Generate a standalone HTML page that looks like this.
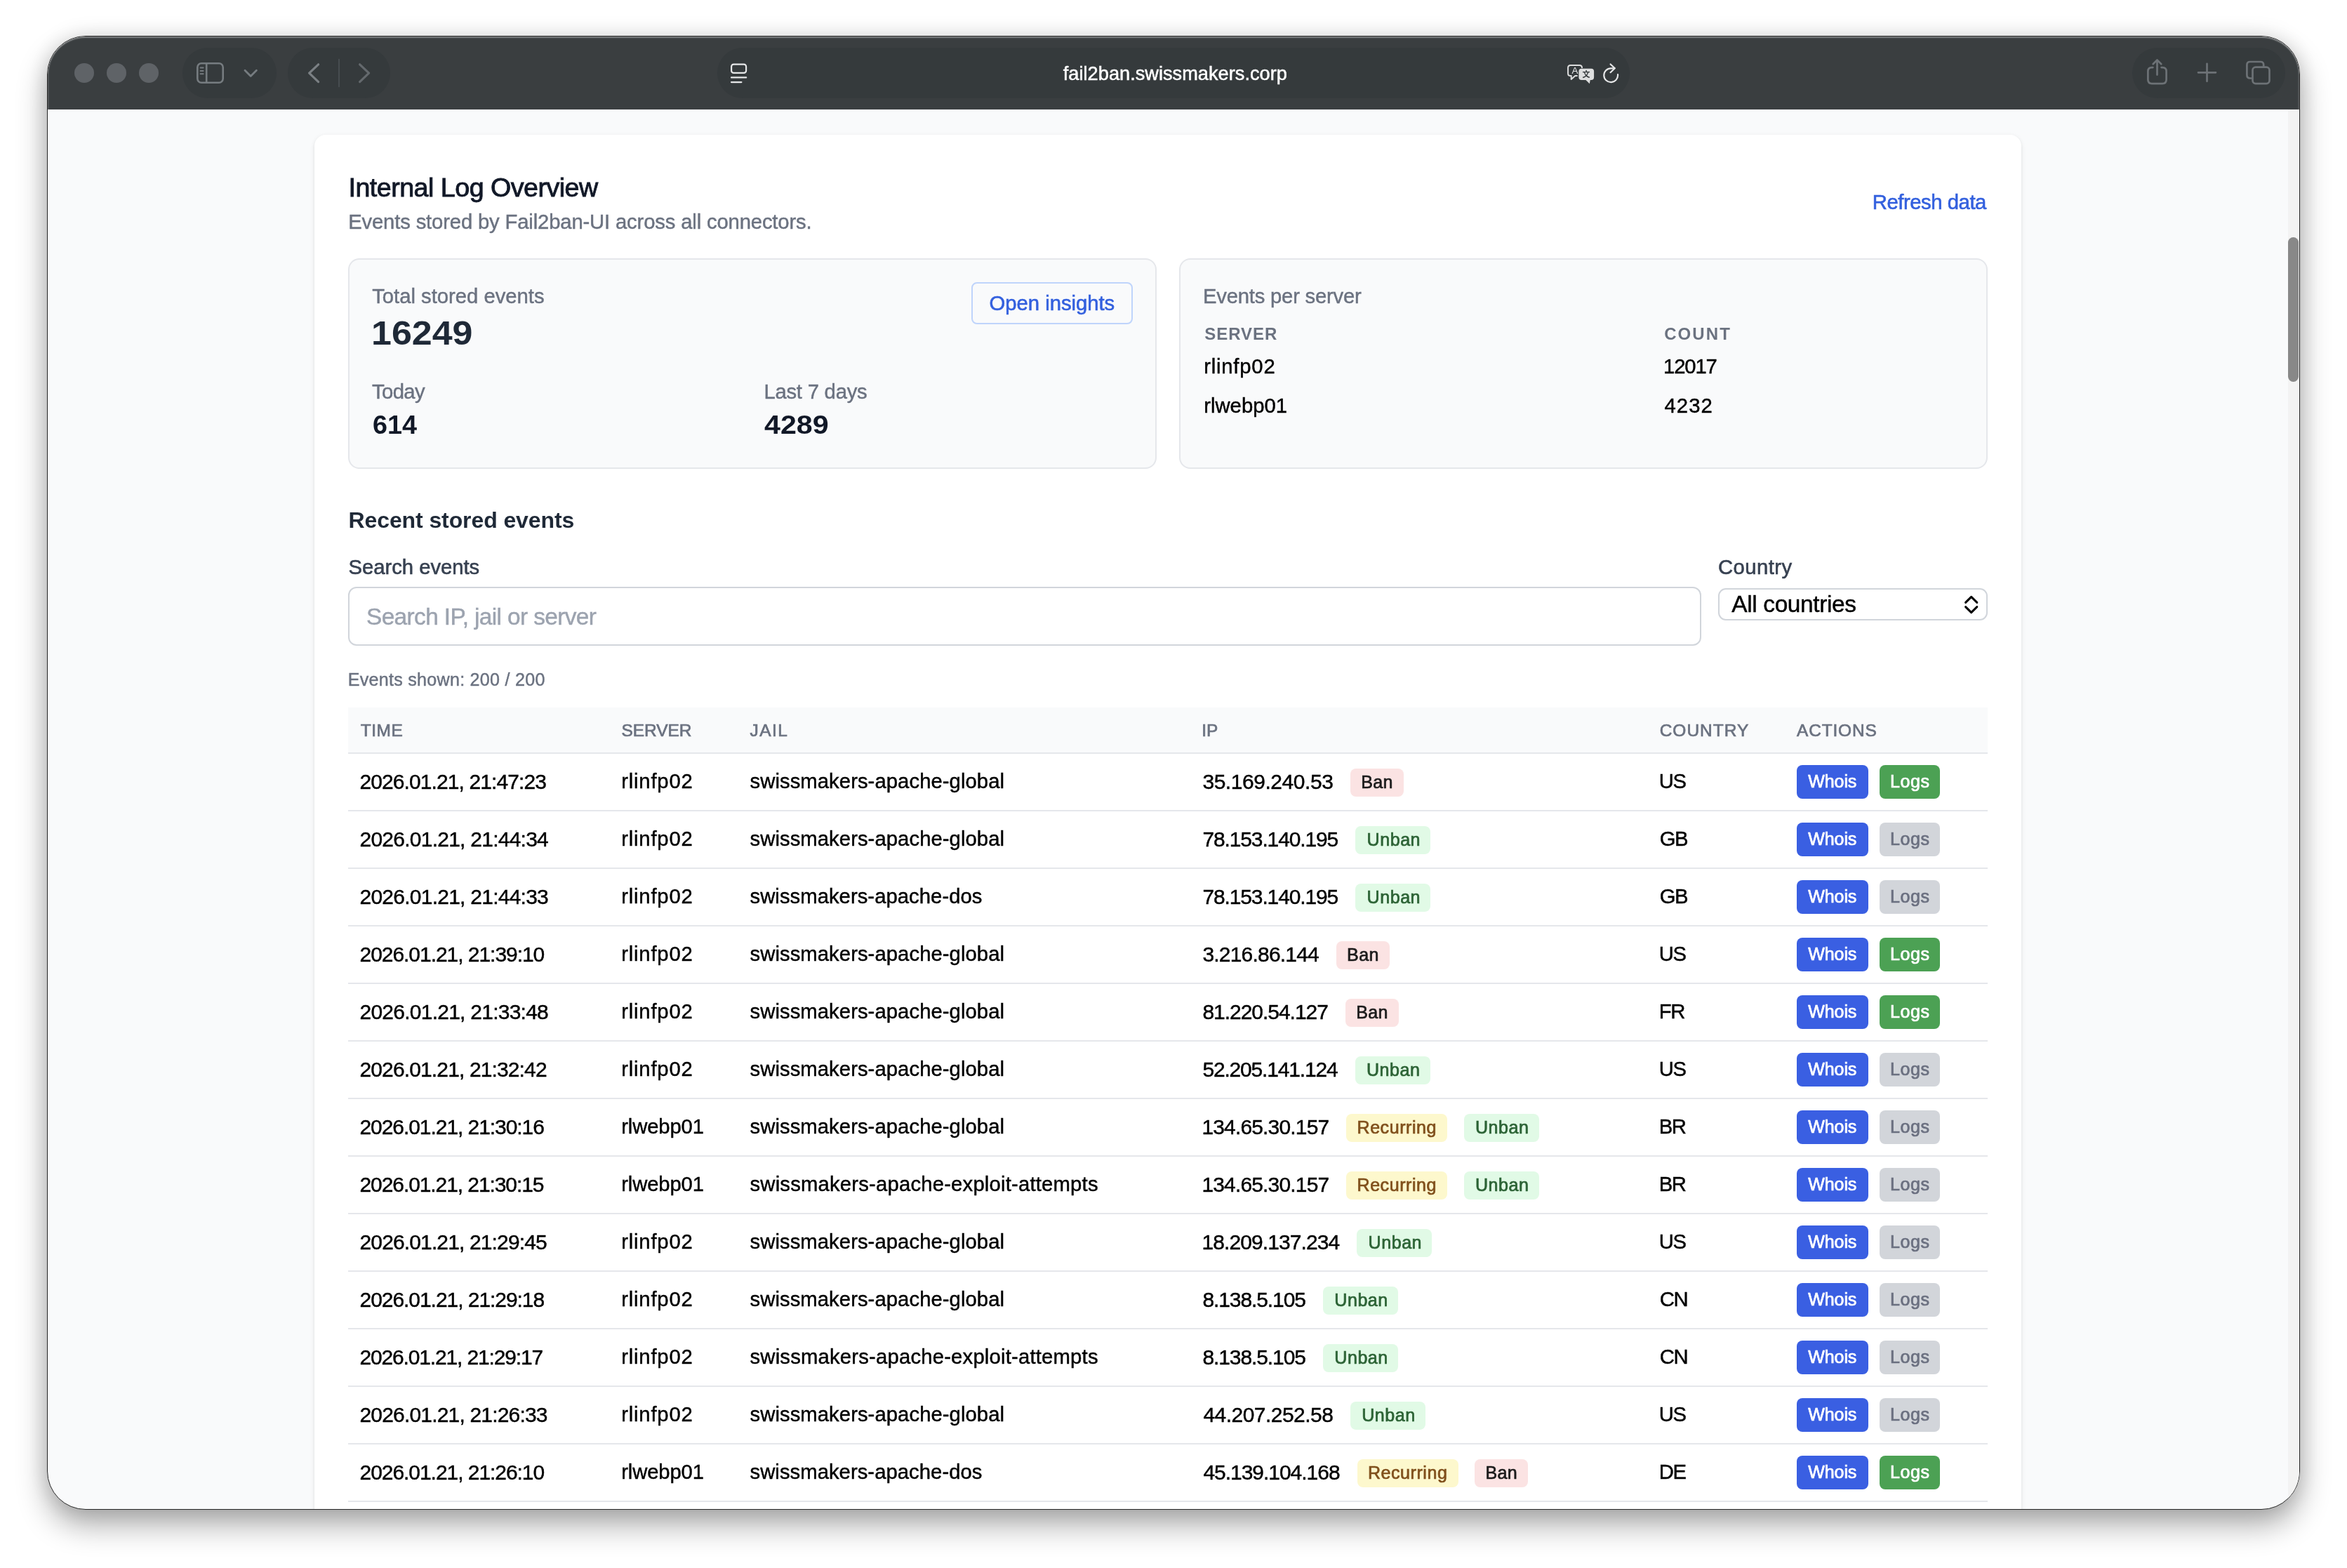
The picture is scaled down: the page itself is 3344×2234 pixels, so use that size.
<!DOCTYPE html>
<html lang="en"><head><meta charset="utf-8"><title>Fail2ban UI - Internal Log Overview</title>
<style>
html,body{margin:0;padding:0;}
body{width:3344px;height:2234px;background:#fff;position:relative;overflow:hidden;font-family:"Liberation Sans",sans-serif;}
.win{position:absolute;left:67px;top:51px;width:3208px;height:2098px;border:1px solid #262626;border-radius:55px;background:#f9fafb;overflow:hidden;will-change:transform;
 box-shadow:0 22px 44px rgba(0,0,0,.33),0 0 32px rgba(0,0,0,.12);}
.bar{position:absolute;left:0;top:0;width:3208px;height:104px;background:#3a3e40;border-radius:54px 54px 0 0;
 box-shadow:inset 0 2.5px 1.5px -0.5px rgba(255,255,255,.33),inset 2px 0 1.5px -0.5px rgba(255,255,255,.16),inset -2px 0 1.5px -0.5px rgba(255,255,255,.16);}
.b{position:absolute;box-sizing:border-box;}
.t{position:absolute;white-space:pre;line-height:1;}
</style></head>
<body>
<div class="win">
<header class="g toolbar">
<div class="bar"></div>
<div class="b" style="left:38px;top:38px;width:28px;height:28px;border-radius:50%;background:#5f6367;"></div>
<div class="b" style="left:84px;top:38px;width:28px;height:28px;border-radius:50%;background:#5f6367;"></div>
<div class="b" style="left:130px;top:38px;width:28px;height:28px;border-radius:50%;background:#5f6367;"></div>
<div class="b" style="left:192px;top:16px;width:134px;height:72px;border-radius:36px;background:#353a3c;"></div>
<div class="b" style="left:342px;top:16px;width:146px;height:72px;border-radius:36px;background:#353a3c;"></div>
<div class="b" style="left:954px;top:16px;width:1300px;height:72px;border-radius:36px;background:#353a3c;"></div>
<div class="b" style="left:2970px;top:16px;width:218px;height:72px;border-radius:36px;background:#353a3c;"></div>
<svg class="b" style="left:208px;top:32px" width="100" height="40" viewBox="276 84 100 40" fill="none" stroke="#767c80" stroke-width="2.6" stroke-linecap="round" stroke-linejoin="round"><rect x="281.3" y="90.3" width="36.4" height="27.4" rx="5.6"/><path d="M294.2 90.5V117.5"/><path d="M285.6 96.5H289.6M285.6 100.9H289.6M285.6 105.3H289.6" stroke-width="2"/><path d="M349 100.2L357.2 108.4L365.4 100.2" stroke-width="2.8"/></svg>
<svg class="b" style="left:362px;top:28px" width="110" height="48" viewBox="430 80 110 48" fill="none" stroke-linecap="round" stroke-linejoin="round"><path d="M453.6 91.8L440.6 104.2L453.6 116.6" stroke="#7b8084" stroke-width="3.2"/><path d="M483 84.5V123.5" stroke="#4d5256" stroke-width="1.6"/><path d="M512.6 91.8L525.6 104.2L512.6 116.6" stroke="#64696d" stroke-width="3.2"/></svg>
<svg class="b" style="left:968px;top:34px" width="36" height="36" viewBox="1036 86 36 36" fill="none" stroke="#e6e7e8" stroke-width="2.2" stroke-linecap="round"><rect x="1042.1" y="91.7" width="21" height="12.2" rx="3.2"/><path d="M1042 110.4H1063.2M1042 117.1H1056.4"/></svg>
<span class="t" style="left:1446.8px;top:38.5px;font-size:27.17px;color:#ffffff;letter-spacing:0.027px;-webkit-text-stroke:0.5px #ffffff;">fail2ban.swissmakers.corp</span>
<svg class="b" style="left:2160px;top:36px" width="48" height="36" viewBox="2228 88 48 36"><path d="M2254 97V96.6Q2254 93 2250.4 93H2237.7Q2234.1 93 2234.1 96.6V104.5Q2234.1 108.1 2237.7 108.1H2238.7V113L2244.3 108.1H2247.6" fill="none" stroke="#dcdddd" stroke-width="2" stroke-linejoin="round" stroke-linecap="butt"/><path d="M2253.4 97.7H2267.1Q2271.1 97.7 2271.1 101.7V110.1Q2271.1 114.1 2267.1 114.1H2265.8L2264.8 119.3L2259.4 114.1H2253.4Q2249.4 114.1 2249.4 110.1V101.7Q2249.4 97.7 2253.4 97.7Z" fill="#dedfdf"/><text x="2243.85" y="104.9" font-family="Liberation Sans, sans-serif" font-size="13.4" fill="#e6e7e8" text-anchor="middle">A</text><text x="2260" y="109.8" font-family="Noto Sans CJK SC, sans-serif" font-size="11" font-weight="700" fill="#353a3c" text-anchor="middle">文</text></svg>
<svg class="b" style="left:2210px;top:34px" width="36" height="38" viewBox="2278 86 36 38" fill="none" stroke="#e6e7e8" stroke-width="2.2" stroke-linecap="round" stroke-linejoin="round"><path d="M2305.05 106.2A9.9 9.9 0 1 1 2295.4 97.3L2300.4 97.3"/><path d="M2294.6 91.5L2300.8 97.3L2294.6 103.2"/></svg>
<svg class="b" style="left:2982px;top:28px" width="200" height="48" viewBox="3050 80 200 48" fill="none" stroke="#6d7276" stroke-width="2.7" stroke-linecap="round" stroke-linejoin="round"><path d="M3067.4 96.1H3066Q3060.4 96.1 3060.4 101.6V113.6Q3060.4 119.1 3066 119.1H3081Q3086.6 119.1 3086.6 113.6V101.6Q3086.6 96.1 3081 96.1H3079.6"/><path d="M3073.5 106.6V85.6M3067.7 91.2L3073.5 85.4L3079.3 91.2"/><path d="M3132 103.3H3157M3144.5 90.8V115.8"/><path d="M3207.5 111.5H3205.8Q3201.4 111.5 3201.4 107.1V92.4Q3201.4 88 3205.8 88H3220.8Q3225.2 88 3225.2 92.4V94.5"/><rect x="3209.5" y="95.6" width="24" height="23.5" rx="4.4"/></svg>
</header>
<main class="g page">
<div class="b" style="left:3192px;top:104px;width:16px;height:1994px;background:#f3f3f3;"></div>
<div class="b" style="left:3192px;top:286px;width:15px;height:206px;background:#888888;border-radius:7.5px;"></div>
<section class="g card">
<div class="b" style="left:380px;top:140px;width:2432px;height:2000px;background:#fff;border-radius:16px;box-shadow:0 2px 6px rgba(0,0,0,.1),0 2px 4px -2px rgba(0,0,0,.1);"></div>
<span class="t" style="left:428.5px;top:196.7px;font-size:37.62px;color:#111827;font-weight:500;letter-spacing:-0.508px;-webkit-text-stroke:0.9px #111827;">Internal Log Overview</span>
<span class="t" style="left:428.2px;top:250.2px;font-size:29.26px;color:#6b7280;letter-spacing:-0.155px;-webkit-text-stroke:0.45px #6b7280;">Events stored by Fail2ban-UI across all connectors.</span>
<span class="t" style="left:2599.8px;top:222.4px;font-size:29.26px;color:#3360de;font-weight:500;letter-spacing:-0.446px;-webkit-text-stroke:0.6px #3360de;">Refresh data</span>
<div class="g stats">
<div class="b" style="left:428px;top:316px;width:1152px;height:300px;background:#f9fafb;border:2px solid #e5e7eb;border-radius:16px;"></div>
<div class="b" style="left:1612px;top:316px;width:1152px;height:300px;background:#f9fafb;border:2px solid #e5e7eb;border-radius:16px;"></div>
<span class="t" style="left:462.2px;top:355.8px;font-size:29.26px;color:#6b7280;letter-spacing:-0.010px;-webkit-text-stroke:0.45px #6b7280;">Total stored events</span>
<span class="t" style="left:460.8px;top:399.4px;font-size:48.0px;color:#1f2937;font-weight:700;transform:scaleX(1.0817);transform-origin:0 0;">16249</span>
<span class="t" style="left:462.0px;top:491.5px;font-size:29.26px;color:#6b7280;letter-spacing:-0.607px;-webkit-text-stroke:0.45px #6b7280;">Today</span>
<span class="t" style="left:462.9px;top:535.5px;font-size:36.0px;color:#111827;font-weight:700;transform:scaleX(1.0501);transform-origin:0 0;">614</span>
<span class="t" style="left:1020.4px;top:491.5px;font-size:29.26px;color:#6b7280;letter-spacing:-0.227px;-webkit-text-stroke:0.45px #6b7280;">Last 7 days</span>
<span class="t" style="left:1020.6px;top:535.5px;font-size:36.0px;color:#111827;font-weight:700;transform:scaleX(1.1446);transform-origin:0 0;">4289</span>
<div class="b" style="left:1316px;top:350px;width:230px;height:60px;border:2px solid #bfd4fb;border-radius:8px;background:#f9fafb;"></div>
<span class="t" style="left:1341.6px;top:366.2px;font-size:29.26px;color:#3360de;font-weight:500;letter-spacing:-0.019px;-webkit-text-stroke:0.6px #3360de;">Open insights</span>
<span class="t" style="left:1646.0px;top:356.2px;font-size:29.26px;color:#6b7280;letter-spacing:-0.217px;-webkit-text-stroke:0.45px #6b7280;">Events per server</span>
<span class="t" style="left:1648.2px;top:411.5px;font-size:24.0px;color:#6b7280;font-weight:700;letter-spacing:0.974px;">SERVER</span>
<span class="t" style="left:2303.2px;top:411.5px;font-size:24.0px;color:#6b7280;font-weight:700;letter-spacing:2.084px;">COUNT</span>
<span class="t" style="left:1647.2px;top:455.7px;font-size:29.26px;color:#000000;letter-spacing:0.791px;-webkit-text-stroke:0.45px #000000;">rlinfp02</span>
<span class="t" style="left:2302.0px;top:455.7px;font-size:29.26px;color:#000000;letter-spacing:-1.117px;-webkit-text-stroke:0.45px #000000;">12017</span>
<span class="t" style="left:1647.2px;top:511.8px;font-size:29.26px;color:#000000;letter-spacing:0.024px;-webkit-text-stroke:0.45px #000000;">rlwebp01</span>
<span class="t" style="left:2303.5px;top:511.8px;font-size:29.26px;color:#000000;letter-spacing:1.066px;-webkit-text-stroke:0.45px #000000;">4232</span>
</div>
<div class="g filters">
<span class="t" style="left:428.5px;top:673.3px;font-size:32.0px;color:#1f2937;font-weight:700;letter-spacing:-0.099px;">Recent stored events</span>
<span class="t" style="left:428.6px;top:742.0px;font-size:29.26px;color:#374151;font-weight:500;letter-spacing:-0.030px;-webkit-text-stroke:0.6px #374151;">Search events</span>
<div class="b" style="left:428px;top:784px;width:1928px;height:84px;background:#fff;border:2px solid #d1d5db;border-radius:12px;"></div>
<span class="t" style="left:454.0px;top:810.1px;font-size:33.44px;color:#9ca3af;letter-spacing:-0.633px;-webkit-text-stroke:0.45px #9ca3af;">Search IP, jail or server</span>
<span class="t" style="left:2380.0px;top:742.4px;font-size:29.26px;color:#374151;font-weight:500;letter-spacing:0.435px;-webkit-text-stroke:0.6px #374151;">Country</span>
<div class="b" style="left:2380px;top:786px;width:384px;height:46px;background:#fff;border:2px solid #d1d5db;border-radius:11px;"></div>
<span class="t" style="left:2399.3px;top:791.5px;font-size:33.44px;color:#000000;letter-spacing:-0.361px;-webkit-text-stroke:0.45px #000000;">All countries</span>
<svg class="b" style="left:2726px;top:792px" width="30" height="36" viewBox="2794 844 30 36" fill="none" stroke="#000" stroke-width="3" stroke-linecap="round" stroke-linejoin="round"><path d="M2800.6 858.4L2808.7 850.4L2816.8 858.4M2800.6 864.6L2808.7 872.6L2816.8 864.6"/></svg>
<span class="t" style="left:427.8px;top:904.0px;font-size:25.08px;color:#6b7280;letter-spacing:0.268px;-webkit-text-stroke:0.45px #6b7280;">Events shown: 200 / 200</span>
</div>
<div class="g table">
<div class="g thead">
<div class="b" style="left:428px;top:956px;width:2336px;height:64px;background:#f9fafb;"></div>
<div class="b" style="left:428px;top:1020px;width:2336px;height:2px;background:#e5e7eb;"></div>
<span class="t" style="left:445.7px;top:976.5px;font-size:24.48px;color:#6b7280;font-weight:500;letter-spacing:0.558px;-webkit-text-stroke:0.7px #6b7280;">TIME</span>
<span class="t" style="left:817.5px;top:976.5px;font-size:24.48px;color:#6b7280;font-weight:500;letter-spacing:-0.062px;-webkit-text-stroke:0.7px #6b7280;">SERVER</span>
<span class="t" style="left:1000.5px;top:976.5px;font-size:24.48px;color:#6b7280;font-weight:500;letter-spacing:1.449px;-webkit-text-stroke:0.7px #6b7280;">JAIL</span>
<span class="t" style="left:1644.3px;top:976.5px;font-size:24.48px;color:#6b7280;font-weight:500;-webkit-text-stroke:0.7px #6b7280;">IP</span>
<span class="t" style="left:2296.7px;top:976.5px;font-size:24.48px;color:#6b7280;font-weight:500;letter-spacing:1.014px;-webkit-text-stroke:0.7px #6b7280;">COUNTRY</span>
<span class="t" style="left:2492.0px;top:976.5px;font-size:24.48px;color:#6b7280;font-weight:500;letter-spacing:0.844px;-webkit-text-stroke:0.7px #6b7280;">ACTIONS</span>
</div>
<div class="g tr">
<span class="t c" style="left:444.5px;top:1046.6px;font-size:29.96px;color:#000000;letter-spacing:-0.884px;-webkit-text-stroke:0.45px #000000;">2026.01.21, 21:47:23</span>
<span class="t c" style="left:817.2px;top:1047.2px;font-size:29.26px;color:#000000;letter-spacing:0.805px;-webkit-text-stroke:0.45px #000000;">rlinfp02</span>
<span class="t c" style="left:1000.5px;top:1047.2px;font-size:29.26px;color:#000000;letter-spacing:0.067px;-webkit-text-stroke:0.45px #000000;">swissmakers-apache-global</span>
<span class="t c ip" style="left:1645.4px;top:1046.6px;font-size:29.96px;color:#000000;letter-spacing:-0.424px;-webkit-text-stroke:0.45px #000000;">35.169.240.53</span>
<span class="t c" style="left:2295.7px;top:1047.2px;font-size:29.26px;color:#000000;letter-spacing:-1.323px;-webkit-text-stroke:0.45px #000000;">US</span>
<div class="b" style="left:1856px;top:1043px;width:76px;height:40px;background:#fbe3e3;border-radius:8px;"></div>
<span class="t" style="left:1871.2px;top:1050.3px;font-size:25.08px;color:#1b1b1b;font-weight:500;letter-spacing:0.363px;-webkit-text-stroke:0.7px #1b1b1b;">Ban</span>
<div class="b" style="left:2492px;top:1038px;width:102px;height:48px;background:#3a5fe2;border-radius:8px;"></div>
<span class="t" style="left:2508.3px;top:1048.9px;font-size:25.08px;color:#ffffff;font-weight:500;letter-spacing:-0.159px;-webkit-text-stroke:0.7px #ffffff;">Whois</span>
<div class="b" style="left:2610px;top:1038px;width:86px;height:48px;background:#4ca154;border-radius:8px;"></div>
<span class="t" style="left:2625.1px;top:1048.9px;font-size:25.08px;color:#ffffff;font-weight:500;letter-spacing:0.519px;-webkit-text-stroke:0.7px #ffffff;">Logs</span>
<div class="b" style="left:428px;top:1102px;width:2336px;height:2px;background:#e5e7eb;"></div>
</div>
<div class="g tr">
<span class="t c" style="left:444.5px;top:1128.6px;font-size:29.96px;color:#000000;letter-spacing:-0.731px;-webkit-text-stroke:0.45px #000000;">2026.01.21, 21:44:34</span>
<span class="t c" style="left:817.2px;top:1129.2px;font-size:29.26px;color:#000000;letter-spacing:0.805px;-webkit-text-stroke:0.45px #000000;">rlinfp02</span>
<span class="t c" style="left:1000.5px;top:1129.2px;font-size:29.26px;color:#000000;letter-spacing:0.067px;-webkit-text-stroke:0.45px #000000;">swissmakers-apache-global</span>
<span class="t c ip" style="left:1645.4px;top:1128.6px;font-size:29.96px;color:#000000;letter-spacing:-1.104px;-webkit-text-stroke:0.45px #000000;">78.153.140.195</span>
<span class="t c" style="left:2296.7px;top:1129.2px;font-size:29.26px;color:#000000;letter-spacing:-1.323px;-webkit-text-stroke:0.45px #000000;">GB</span>
<div class="b" style="left:1863px;top:1125px;width:107px;height:40px;background:#e1fae6;border-radius:8px;"></div>
<span class="t" style="left:1879.6px;top:1132.3px;font-size:25.08px;color:#2c6335;font-weight:500;letter-spacing:0.512px;-webkit-text-stroke:0.7px #2c6335;">Unban</span>
<div class="b" style="left:2492px;top:1120px;width:102px;height:48px;background:#3a5fe2;border-radius:8px;"></div>
<span class="t" style="left:2508.3px;top:1130.9px;font-size:25.08px;color:#ffffff;font-weight:500;letter-spacing:-0.159px;-webkit-text-stroke:0.7px #ffffff;">Whois</span>
<div class="b" style="left:2610px;top:1120px;width:86px;height:48px;background:#d2d5da;border-radius:8px;"></div>
<span class="t" style="left:2625.1px;top:1130.9px;font-size:25.08px;color:#6b7080;font-weight:500;letter-spacing:0.519px;-webkit-text-stroke:0.7px #6b7080;">Logs</span>
<div class="b" style="left:428px;top:1184px;width:2336px;height:2px;background:#e5e7eb;"></div>
</div>
<div class="g tr">
<span class="t c" style="left:444.5px;top:1210.6px;font-size:29.96px;color:#000000;letter-spacing:-0.731px;-webkit-text-stroke:0.45px #000000;">2026.01.21, 21:44:33</span>
<span class="t c" style="left:817.2px;top:1211.2px;font-size:29.26px;color:#000000;letter-spacing:0.805px;-webkit-text-stroke:0.45px #000000;">rlinfp02</span>
<span class="t c" style="left:1000.5px;top:1211.2px;font-size:29.26px;color:#000000;letter-spacing:0.044px;-webkit-text-stroke:0.45px #000000;">swissmakers-apache-dos</span>
<span class="t c ip" style="left:1645.4px;top:1210.6px;font-size:29.96px;color:#000000;letter-spacing:-1.104px;-webkit-text-stroke:0.45px #000000;">78.153.140.195</span>
<span class="t c" style="left:2296.7px;top:1211.2px;font-size:29.26px;color:#000000;letter-spacing:-1.323px;-webkit-text-stroke:0.45px #000000;">GB</span>
<div class="b" style="left:1863px;top:1207px;width:107px;height:40px;background:#e1fae6;border-radius:8px;"></div>
<span class="t" style="left:1879.6px;top:1214.3px;font-size:25.08px;color:#2c6335;font-weight:500;letter-spacing:0.512px;-webkit-text-stroke:0.7px #2c6335;">Unban</span>
<div class="b" style="left:2492px;top:1202px;width:102px;height:48px;background:#3a5fe2;border-radius:8px;"></div>
<span class="t" style="left:2508.3px;top:1212.9px;font-size:25.08px;color:#ffffff;font-weight:500;letter-spacing:-0.159px;-webkit-text-stroke:0.7px #ffffff;">Whois</span>
<div class="b" style="left:2610px;top:1202px;width:86px;height:48px;background:#d2d5da;border-radius:8px;"></div>
<span class="t" style="left:2625.1px;top:1212.9px;font-size:25.08px;color:#6b7080;font-weight:500;letter-spacing:0.519px;-webkit-text-stroke:0.7px #6b7080;">Logs</span>
<div class="b" style="left:428px;top:1266px;width:2336px;height:2px;background:#e5e7eb;"></div>
</div>
<div class="g tr">
<span class="t c" style="left:444.5px;top:1292.6px;font-size:29.96px;color:#000000;letter-spacing:-1.021px;-webkit-text-stroke:0.45px #000000;">2026.01.21, 21:39:10</span>
<span class="t c" style="left:817.2px;top:1293.2px;font-size:29.26px;color:#000000;letter-spacing:0.805px;-webkit-text-stroke:0.45px #000000;">rlinfp02</span>
<span class="t c" style="left:1000.5px;top:1293.2px;font-size:29.26px;color:#000000;letter-spacing:0.067px;-webkit-text-stroke:0.45px #000000;">swissmakers-apache-global</span>
<span class="t c ip" style="left:1645.4px;top:1292.6px;font-size:29.96px;color:#000000;letter-spacing:-0.776px;-webkit-text-stroke:0.45px #000000;">3.216.86.144</span>
<span class="t c" style="left:2295.7px;top:1293.2px;font-size:29.26px;color:#000000;letter-spacing:-1.323px;-webkit-text-stroke:0.45px #000000;">US</span>
<div class="b" style="left:1836px;top:1289px;width:76px;height:40px;background:#fbe3e3;border-radius:8px;"></div>
<span class="t" style="left:1851.1px;top:1296.3px;font-size:25.08px;color:#1b1b1b;font-weight:500;letter-spacing:0.363px;-webkit-text-stroke:0.7px #1b1b1b;">Ban</span>
<div class="b" style="left:2492px;top:1284px;width:102px;height:48px;background:#3a5fe2;border-radius:8px;"></div>
<span class="t" style="left:2508.3px;top:1294.9px;font-size:25.08px;color:#ffffff;font-weight:500;letter-spacing:-0.159px;-webkit-text-stroke:0.7px #ffffff;">Whois</span>
<div class="b" style="left:2610px;top:1284px;width:86px;height:48px;background:#4ca154;border-radius:8px;"></div>
<span class="t" style="left:2625.1px;top:1294.9px;font-size:25.08px;color:#ffffff;font-weight:500;letter-spacing:0.519px;-webkit-text-stroke:0.7px #ffffff;">Logs</span>
<div class="b" style="left:428px;top:1348px;width:2336px;height:2px;background:#e5e7eb;"></div>
</div>
<div class="g tr">
<span class="t c" style="left:444.5px;top:1374.6px;font-size:29.96px;color:#000000;letter-spacing:-0.731px;-webkit-text-stroke:0.45px #000000;">2026.01.21, 21:33:48</span>
<span class="t c" style="left:817.2px;top:1375.2px;font-size:29.26px;color:#000000;letter-spacing:0.805px;-webkit-text-stroke:0.45px #000000;">rlinfp02</span>
<span class="t c" style="left:1000.5px;top:1375.2px;font-size:29.26px;color:#000000;letter-spacing:0.067px;-webkit-text-stroke:0.45px #000000;">swissmakers-apache-global</span>
<span class="t c ip" style="left:1645.4px;top:1374.6px;font-size:29.96px;color:#000000;letter-spacing:-1.008px;-webkit-text-stroke:0.45px #000000;">81.220.54.127</span>
<span class="t c" style="left:2295.7px;top:1375.2px;font-size:29.26px;color:#000000;letter-spacing:-1.323px;-webkit-text-stroke:0.45px #000000;">FR</span>
<div class="b" style="left:1849px;top:1371px;width:76px;height:40px;background:#fbe3e3;border-radius:8px;"></div>
<span class="t" style="left:1864.2px;top:1378.3px;font-size:25.08px;color:#1b1b1b;font-weight:500;letter-spacing:0.363px;-webkit-text-stroke:0.7px #1b1b1b;">Ban</span>
<div class="b" style="left:2492px;top:1366px;width:102px;height:48px;background:#3a5fe2;border-radius:8px;"></div>
<span class="t" style="left:2508.3px;top:1376.9px;font-size:25.08px;color:#ffffff;font-weight:500;letter-spacing:-0.159px;-webkit-text-stroke:0.7px #ffffff;">Whois</span>
<div class="b" style="left:2610px;top:1366px;width:86px;height:48px;background:#4ca154;border-radius:8px;"></div>
<span class="t" style="left:2625.1px;top:1376.9px;font-size:25.08px;color:#ffffff;font-weight:500;letter-spacing:0.519px;-webkit-text-stroke:0.7px #ffffff;">Logs</span>
<div class="b" style="left:428px;top:1430px;width:2336px;height:2px;background:#e5e7eb;"></div>
</div>
<div class="g tr">
<span class="t c" style="left:444.5px;top:1456.6px;font-size:29.96px;color:#000000;letter-spacing:-0.847px;-webkit-text-stroke:0.45px #000000;">2026.01.21, 21:32:42</span>
<span class="t c" style="left:817.2px;top:1457.2px;font-size:29.26px;color:#000000;letter-spacing:0.805px;-webkit-text-stroke:0.45px #000000;">rlinfp02</span>
<span class="t c" style="left:1000.5px;top:1457.2px;font-size:29.26px;color:#000000;letter-spacing:0.067px;-webkit-text-stroke:0.45px #000000;">swissmakers-apache-global</span>
<span class="t c ip" style="left:1645.4px;top:1456.6px;font-size:29.96px;color:#000000;letter-spacing:-1.150px;-webkit-text-stroke:0.45px #000000;">52.205.141.124</span>
<span class="t c" style="left:2295.7px;top:1457.2px;font-size:29.26px;color:#000000;letter-spacing:-1.323px;-webkit-text-stroke:0.45px #000000;">US</span>
<div class="b" style="left:1863px;top:1453px;width:107px;height:40px;background:#e1fae6;border-radius:8px;"></div>
<span class="t" style="left:1879.0px;top:1460.3px;font-size:25.08px;color:#2c6335;font-weight:500;letter-spacing:0.512px;-webkit-text-stroke:0.7px #2c6335;">Unban</span>
<div class="b" style="left:2492px;top:1448px;width:102px;height:48px;background:#3a5fe2;border-radius:8px;"></div>
<span class="t" style="left:2508.3px;top:1458.9px;font-size:25.08px;color:#ffffff;font-weight:500;letter-spacing:-0.159px;-webkit-text-stroke:0.7px #ffffff;">Whois</span>
<div class="b" style="left:2610px;top:1448px;width:86px;height:48px;background:#d2d5da;border-radius:8px;"></div>
<span class="t" style="left:2625.1px;top:1458.9px;font-size:25.08px;color:#6b7080;font-weight:500;letter-spacing:0.519px;-webkit-text-stroke:0.7px #6b7080;">Logs</span>
<div class="b" style="left:428px;top:1512px;width:2336px;height:2px;background:#e5e7eb;"></div>
</div>
<div class="g tr">
<span class="t c" style="left:444.5px;top:1538.6px;font-size:29.96px;color:#000000;letter-spacing:-1.042px;-webkit-text-stroke:0.45px #000000;">2026.01.21, 21:30:16</span>
<span class="t c" style="left:817.2px;top:1539.2px;font-size:29.26px;color:#000000;letter-spacing:-0.133px;-webkit-text-stroke:0.45px #000000;">rlwebp01</span>
<span class="t c" style="left:1000.5px;top:1539.2px;font-size:29.26px;color:#000000;letter-spacing:0.067px;-webkit-text-stroke:0.45px #000000;">swissmakers-apache-global</span>
<span class="t c ip" style="left:1644.4px;top:1538.6px;font-size:29.96px;color:#000000;letter-spacing:-0.816px;-webkit-text-stroke:0.45px #000000;">134.65.30.157</span>
<span class="t c" style="left:2295.7px;top:1539.2px;font-size:29.26px;color:#000000;letter-spacing:-1.323px;-webkit-text-stroke:0.45px #000000;">BR</span>
<div class="b" style="left:1850px;top:1535px;width:144px;height:40px;background:#fdf8cd;border-radius:8px;"></div>
<span class="t" style="left:1865.5px;top:1542.3px;font-size:25.08px;color:#80501c;font-weight:500;letter-spacing:0.529px;-webkit-text-stroke:0.7px #80501c;">Recurring</span>
<div class="b" style="left:2018px;top:1535px;width:107px;height:40px;background:#e1fae6;border-radius:8px;"></div>
<span class="t" style="left:2034.0px;top:1542.3px;font-size:25.08px;color:#2c6335;font-weight:500;letter-spacing:0.512px;-webkit-text-stroke:0.7px #2c6335;">Unban</span>
<div class="b" style="left:2492px;top:1530px;width:102px;height:48px;background:#3a5fe2;border-radius:8px;"></div>
<span class="t" style="left:2508.3px;top:1540.9px;font-size:25.08px;color:#ffffff;font-weight:500;letter-spacing:-0.159px;-webkit-text-stroke:0.7px #ffffff;">Whois</span>
<div class="b" style="left:2610px;top:1530px;width:86px;height:48px;background:#d2d5da;border-radius:8px;"></div>
<span class="t" style="left:2625.1px;top:1540.9px;font-size:25.08px;color:#6b7080;font-weight:500;letter-spacing:0.519px;-webkit-text-stroke:0.7px #6b7080;">Logs</span>
<div class="b" style="left:428px;top:1594px;width:2336px;height:2px;background:#e5e7eb;"></div>
</div>
<div class="g tr">
<span class="t c" style="left:444.5px;top:1620.6px;font-size:29.96px;color:#000000;letter-spacing:-1.063px;-webkit-text-stroke:0.45px #000000;">2026.01.21, 21:30:15</span>
<span class="t c" style="left:817.2px;top:1621.2px;font-size:29.26px;color:#000000;letter-spacing:-0.133px;-webkit-text-stroke:0.45px #000000;">rlwebp01</span>
<span class="t c" style="left:1000.5px;top:1621.2px;font-size:29.26px;color:#000000;letter-spacing:0.198px;-webkit-text-stroke:0.45px #000000;">swissmakers-apache-exploit-attempts</span>
<span class="t c ip" style="left:1644.4px;top:1620.6px;font-size:29.96px;color:#000000;letter-spacing:-0.816px;-webkit-text-stroke:0.45px #000000;">134.65.30.157</span>
<span class="t c" style="left:2295.7px;top:1621.2px;font-size:29.26px;color:#000000;letter-spacing:-1.323px;-webkit-text-stroke:0.45px #000000;">BR</span>
<div class="b" style="left:1850px;top:1617px;width:144px;height:40px;background:#fdf8cd;border-radius:8px;"></div>
<span class="t" style="left:1865.5px;top:1624.3px;font-size:25.08px;color:#80501c;font-weight:500;letter-spacing:0.529px;-webkit-text-stroke:0.7px #80501c;">Recurring</span>
<div class="b" style="left:2018px;top:1617px;width:107px;height:40px;background:#e1fae6;border-radius:8px;"></div>
<span class="t" style="left:2034.0px;top:1624.3px;font-size:25.08px;color:#2c6335;font-weight:500;letter-spacing:0.512px;-webkit-text-stroke:0.7px #2c6335;">Unban</span>
<div class="b" style="left:2492px;top:1612px;width:102px;height:48px;background:#3a5fe2;border-radius:8px;"></div>
<span class="t" style="left:2508.3px;top:1622.9px;font-size:25.08px;color:#ffffff;font-weight:500;letter-spacing:-0.159px;-webkit-text-stroke:0.7px #ffffff;">Whois</span>
<div class="b" style="left:2610px;top:1612px;width:86px;height:48px;background:#d2d5da;border-radius:8px;"></div>
<span class="t" style="left:2625.1px;top:1622.9px;font-size:25.08px;color:#6b7080;font-weight:500;letter-spacing:0.519px;-webkit-text-stroke:0.7px #6b7080;">Logs</span>
<div class="b" style="left:428px;top:1676px;width:2336px;height:2px;background:#e5e7eb;"></div>
</div>
<div class="g tr">
<span class="t c" style="left:444.5px;top:1702.6px;font-size:29.96px;color:#000000;letter-spacing:-0.842px;-webkit-text-stroke:0.45px #000000;">2026.01.21, 21:29:45</span>
<span class="t c" style="left:817.2px;top:1703.2px;font-size:29.26px;color:#000000;letter-spacing:0.805px;-webkit-text-stroke:0.45px #000000;">rlinfp02</span>
<span class="t c" style="left:1000.5px;top:1703.2px;font-size:29.26px;color:#000000;letter-spacing:0.067px;-webkit-text-stroke:0.45px #000000;">swissmakers-apache-global</span>
<span class="t c ip" style="left:1644.4px;top:1702.6px;font-size:29.96px;color:#000000;letter-spacing:-0.873px;-webkit-text-stroke:0.45px #000000;">18.209.137.234</span>
<span class="t c" style="left:2295.7px;top:1703.2px;font-size:29.26px;color:#000000;letter-spacing:-1.323px;-webkit-text-stroke:0.45px #000000;">US</span>
<div class="b" style="left:1865px;top:1699px;width:107px;height:40px;background:#e1fae6;border-radius:8px;"></div>
<span class="t" style="left:1881.6px;top:1706.3px;font-size:25.08px;color:#2c6335;font-weight:500;letter-spacing:0.512px;-webkit-text-stroke:0.7px #2c6335;">Unban</span>
<div class="b" style="left:2492px;top:1694px;width:102px;height:48px;background:#3a5fe2;border-radius:8px;"></div>
<span class="t" style="left:2508.3px;top:1704.9px;font-size:25.08px;color:#ffffff;font-weight:500;letter-spacing:-0.159px;-webkit-text-stroke:0.7px #ffffff;">Whois</span>
<div class="b" style="left:2610px;top:1694px;width:86px;height:48px;background:#d2d5da;border-radius:8px;"></div>
<span class="t" style="left:2625.1px;top:1704.9px;font-size:25.08px;color:#6b7080;font-weight:500;letter-spacing:0.519px;-webkit-text-stroke:0.7px #6b7080;">Logs</span>
<div class="b" style="left:428px;top:1758px;width:2336px;height:2px;background:#e5e7eb;"></div>
</div>
<div class="g tr">
<span class="t c" style="left:444.5px;top:1784.6px;font-size:29.96px;color:#000000;letter-spacing:-1.026px;-webkit-text-stroke:0.45px #000000;">2026.01.21, 21:29:18</span>
<span class="t c" style="left:817.2px;top:1785.2px;font-size:29.26px;color:#000000;letter-spacing:0.805px;-webkit-text-stroke:0.45px #000000;">rlinfp02</span>
<span class="t c" style="left:1000.5px;top:1785.2px;font-size:29.26px;color:#000000;letter-spacing:0.067px;-webkit-text-stroke:0.45px #000000;">swissmakers-apache-global</span>
<span class="t c ip" style="left:1645.4px;top:1784.6px;font-size:29.96px;color:#000000;letter-spacing:-1.068px;-webkit-text-stroke:0.45px #000000;">8.138.5.105</span>
<span class="t c" style="left:2296.7px;top:1785.2px;font-size:29.26px;color:#000000;letter-spacing:-1.323px;-webkit-text-stroke:0.45px #000000;">CN</span>
<div class="b" style="left:1817px;top:1781px;width:107px;height:40px;background:#e1fae6;border-radius:8px;"></div>
<span class="t" style="left:1833.3px;top:1788.3px;font-size:25.08px;color:#2c6335;font-weight:500;letter-spacing:0.512px;-webkit-text-stroke:0.7px #2c6335;">Unban</span>
<div class="b" style="left:2492px;top:1776px;width:102px;height:48px;background:#3a5fe2;border-radius:8px;"></div>
<span class="t" style="left:2508.3px;top:1786.9px;font-size:25.08px;color:#ffffff;font-weight:500;letter-spacing:-0.159px;-webkit-text-stroke:0.7px #ffffff;">Whois</span>
<div class="b" style="left:2610px;top:1776px;width:86px;height:48px;background:#d2d5da;border-radius:8px;"></div>
<span class="t" style="left:2625.1px;top:1786.9px;font-size:25.08px;color:#6b7080;font-weight:500;letter-spacing:0.519px;-webkit-text-stroke:0.7px #6b7080;">Logs</span>
<div class="b" style="left:428px;top:1840px;width:2336px;height:2px;background:#e5e7eb;"></div>
</div>
<div class="g tr">
<span class="t c" style="left:444.5px;top:1866.6px;font-size:29.96px;color:#000000;letter-spacing:-1.131px;-webkit-text-stroke:0.45px #000000;">2026.01.21, 21:29:17</span>
<span class="t c" style="left:817.2px;top:1867.2px;font-size:29.26px;color:#000000;letter-spacing:0.805px;-webkit-text-stroke:0.45px #000000;">rlinfp02</span>
<span class="t c" style="left:1000.5px;top:1867.2px;font-size:29.26px;color:#000000;letter-spacing:0.198px;-webkit-text-stroke:0.45px #000000;">swissmakers-apache-exploit-attempts</span>
<span class="t c ip" style="left:1645.4px;top:1866.6px;font-size:29.96px;color:#000000;letter-spacing:-1.068px;-webkit-text-stroke:0.45px #000000;">8.138.5.105</span>
<span class="t c" style="left:2296.7px;top:1867.2px;font-size:29.26px;color:#000000;letter-spacing:-1.323px;-webkit-text-stroke:0.45px #000000;">CN</span>
<div class="b" style="left:1817px;top:1863px;width:107px;height:40px;background:#e1fae6;border-radius:8px;"></div>
<span class="t" style="left:1833.3px;top:1870.3px;font-size:25.08px;color:#2c6335;font-weight:500;letter-spacing:0.512px;-webkit-text-stroke:0.7px #2c6335;">Unban</span>
<div class="b" style="left:2492px;top:1858px;width:102px;height:48px;background:#3a5fe2;border-radius:8px;"></div>
<span class="t" style="left:2508.3px;top:1868.9px;font-size:25.08px;color:#ffffff;font-weight:500;letter-spacing:-0.159px;-webkit-text-stroke:0.7px #ffffff;">Whois</span>
<div class="b" style="left:2610px;top:1858px;width:86px;height:48px;background:#d2d5da;border-radius:8px;"></div>
<span class="t" style="left:2625.1px;top:1868.9px;font-size:25.08px;color:#6b7080;font-weight:500;letter-spacing:0.519px;-webkit-text-stroke:0.7px #6b7080;">Logs</span>
<div class="b" style="left:428px;top:1922px;width:2336px;height:2px;background:#e5e7eb;"></div>
</div>
<div class="g tr">
<span class="t c" style="left:444.5px;top:1948.6px;font-size:29.96px;color:#000000;letter-spacing:-0.800px;-webkit-text-stroke:0.45px #000000;">2026.01.21, 21:26:33</span>
<span class="t c" style="left:817.2px;top:1949.2px;font-size:29.26px;color:#000000;letter-spacing:0.805px;-webkit-text-stroke:0.45px #000000;">rlinfp02</span>
<span class="t c" style="left:1000.5px;top:1949.2px;font-size:29.26px;color:#000000;letter-spacing:0.067px;-webkit-text-stroke:0.45px #000000;">swissmakers-apache-global</span>
<span class="t c ip" style="left:1646.4px;top:1948.6px;font-size:29.96px;color:#000000;letter-spacing:-0.508px;-webkit-text-stroke:0.45px #000000;">44.207.252.58</span>
<span class="t c" style="left:2295.7px;top:1949.2px;font-size:29.26px;color:#000000;letter-spacing:-1.323px;-webkit-text-stroke:0.45px #000000;">US</span>
<div class="b" style="left:1856px;top:1945px;width:107px;height:40px;background:#e1fae6;border-radius:8px;"></div>
<span class="t" style="left:1872.2px;top:1952.3px;font-size:25.08px;color:#2c6335;font-weight:500;letter-spacing:0.512px;-webkit-text-stroke:0.7px #2c6335;">Unban</span>
<div class="b" style="left:2492px;top:1940px;width:102px;height:48px;background:#3a5fe2;border-radius:8px;"></div>
<span class="t" style="left:2508.3px;top:1950.9px;font-size:25.08px;color:#ffffff;font-weight:500;letter-spacing:-0.159px;-webkit-text-stroke:0.7px #ffffff;">Whois</span>
<div class="b" style="left:2610px;top:1940px;width:86px;height:48px;background:#d2d5da;border-radius:8px;"></div>
<span class="t" style="left:2625.1px;top:1950.9px;font-size:25.08px;color:#6b7080;font-weight:500;letter-spacing:0.519px;-webkit-text-stroke:0.7px #6b7080;">Logs</span>
<div class="b" style="left:428px;top:2004px;width:2336px;height:2px;background:#e5e7eb;"></div>
</div>
<div class="g tr">
<span class="t c" style="left:444.5px;top:2030.6px;font-size:29.96px;color:#000000;letter-spacing:-1.026px;-webkit-text-stroke:0.45px #000000;">2026.01.21, 21:26:10</span>
<span class="t c" style="left:817.2px;top:2031.2px;font-size:29.26px;color:#000000;letter-spacing:-0.133px;-webkit-text-stroke:0.45px #000000;">rlwebp01</span>
<span class="t c" style="left:1000.5px;top:2031.2px;font-size:29.26px;color:#000000;letter-spacing:0.044px;-webkit-text-stroke:0.45px #000000;">swissmakers-apache-dos</span>
<span class="t c ip" style="left:1646.4px;top:2030.6px;font-size:29.96px;color:#000000;letter-spacing:-1.004px;-webkit-text-stroke:0.45px #000000;">45.139.104.168</span>
<span class="t c" style="left:2295.7px;top:2031.2px;font-size:29.26px;color:#000000;letter-spacing:-1.323px;-webkit-text-stroke:0.45px #000000;">DE</span>
<div class="b" style="left:1866px;top:2027px;width:144px;height:40px;background:#fdf8cd;border-radius:8px;"></div>
<span class="t" style="left:1880.9px;top:2034.3px;font-size:25.08px;color:#80501c;font-weight:500;letter-spacing:0.529px;-webkit-text-stroke:0.7px #80501c;">Recurring</span>
<div class="b" style="left:2033px;top:2027px;width:76px;height:40px;background:#fbe3e3;border-radius:8px;"></div>
<span class="t" style="left:2048.4px;top:2034.3px;font-size:25.08px;color:#1b1b1b;font-weight:500;letter-spacing:0.363px;-webkit-text-stroke:0.7px #1b1b1b;">Ban</span>
<div class="b" style="left:2492px;top:2022px;width:102px;height:48px;background:#3a5fe2;border-radius:8px;"></div>
<span class="t" style="left:2508.3px;top:2032.9px;font-size:25.08px;color:#ffffff;font-weight:500;letter-spacing:-0.159px;-webkit-text-stroke:0.7px #ffffff;">Whois</span>
<div class="b" style="left:2610px;top:2022px;width:86px;height:48px;background:#4ca154;border-radius:8px;"></div>
<span class="t" style="left:2625.1px;top:2032.9px;font-size:25.08px;color:#ffffff;font-weight:500;letter-spacing:0.519px;-webkit-text-stroke:0.7px #ffffff;">Logs</span>
<div class="b" style="left:428px;top:2086px;width:2336px;height:2px;background:#e5e7eb;"></div>
</div>
</div>
</section>
</main>
</div>
</body></html>
